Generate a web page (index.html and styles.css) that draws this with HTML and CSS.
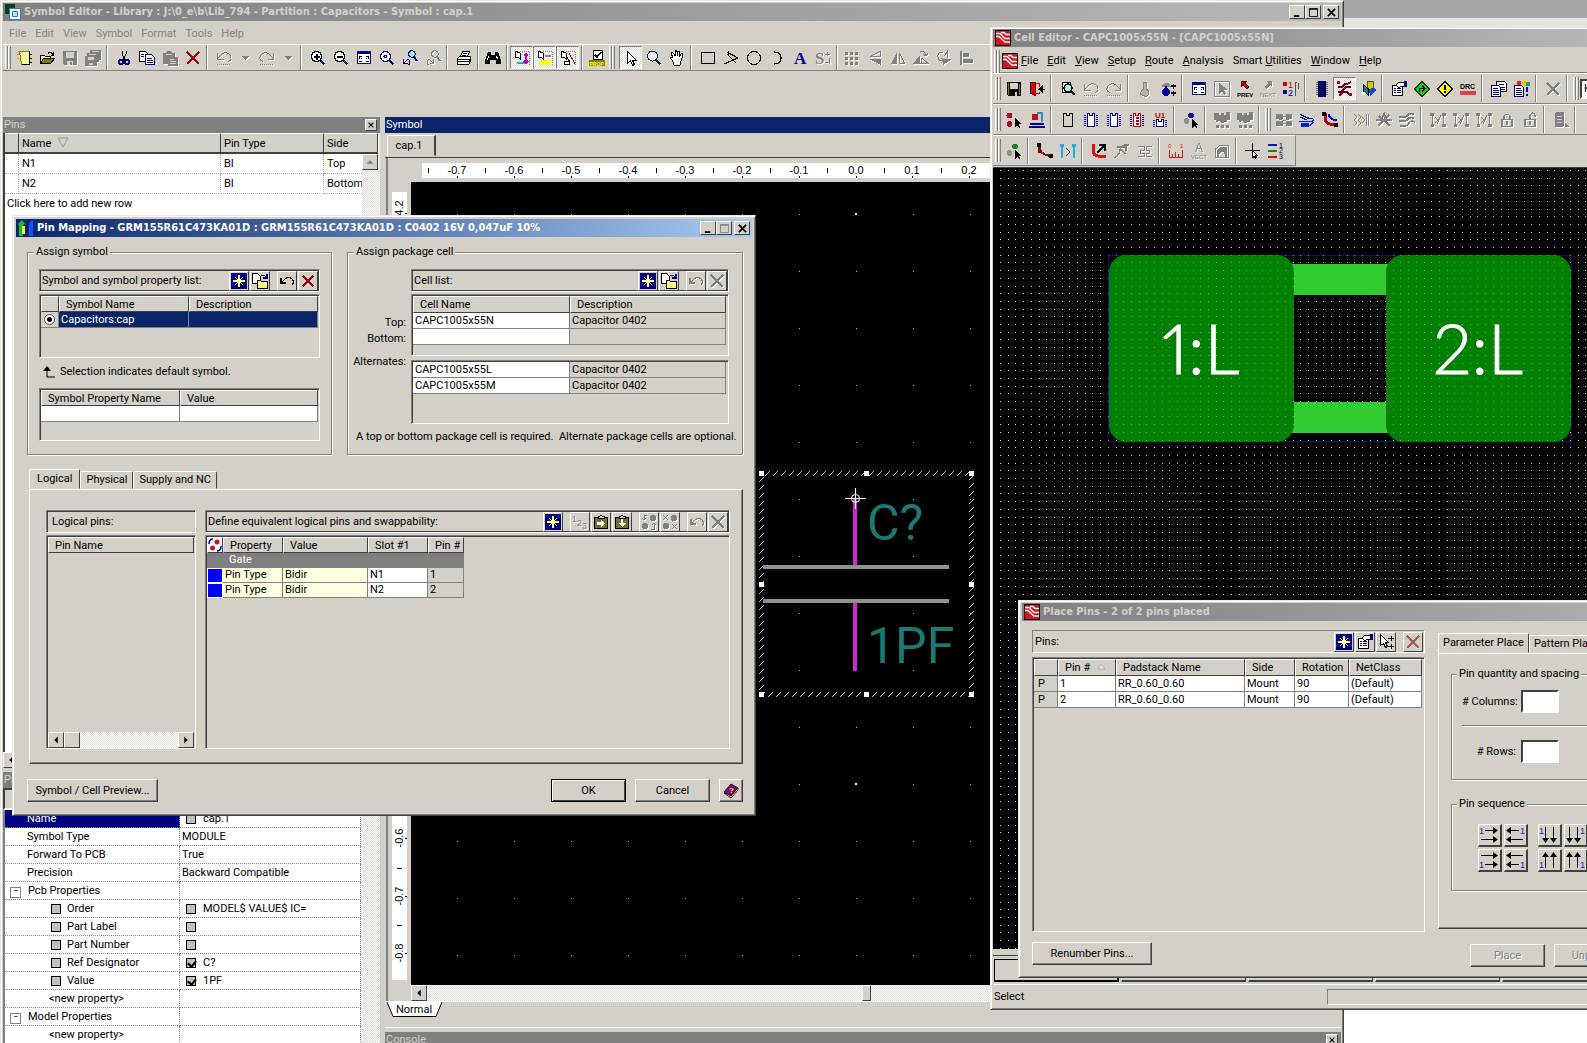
FILE: index.html
```html
<!DOCTYPE html>
<html lang="en">
<head>
<meta charset="utf-8">
<title>Symbol Editor</title>
<link rel="stylesheet" href="styles.css">
</head>
<body>
<svg class="sprite" aria-hidden="true">
  <defs>
    <symbol id="new" viewBox="0 0 16 16"><path fill="#ffffa0" stroke="#808000" d="M3.500 1.500h10v13h-8z"/><path stroke="#000" d="M13.500 1v14M14 4.500h2M14 8.500h2M14 12.500h2M6 14.500h8"/><path stroke="#c8a000" d="M1 4.500h2M1 8.500h2M2 1l3 3"/></symbol>
    <symbol id="open" viewBox="0 0 16 16"><path fill="#ffff80" stroke="#000" d="M1.500 13.500v-8h4l1 1h5v3"/><path fill="#808000" stroke="#000" d="M1.500 13.500l3-5h11l-4 5z"/><path fill="none" stroke="#000" d="M9 3.500q2-2 4 0l1 1M14.500 2v3h-3"/></symbol>
    <symbol id="save" viewBox="0 0 16 16"><path fill="currentColor" d="M1 1h14v14H2l-1-1z"/><path fill="#d4d0c8" d="M4 2h8v6H4zM5 11h6v4H5z"/><path fill="currentColor" d="M8 12h2v3H8z"/></symbol>
    <symbol id="saveall" viewBox="0 0 16 16"><path fill="currentColor" d="M5 0h11v10h-2v2h-2v4H0V6h2V3h3z"/><path fill="#d4d0c8" d="M7 1h7v1H7zM4 4h7v1H4zM3 7h6v3H3zM4 13h4v2H4z"/></symbol>
    <symbol id="cut" viewBox="0 0 16 16"><path fill="none" stroke="#000" d="M6 1v3l3 6M10 1v3l-3 6"/><g fill="none" stroke="#000080" stroke-width="1.500"><circle cx="5" cy="12" r="2.200"/><circle cx="11" cy="12" r="2.200"/></g></symbol>
    <symbol id="copy" viewBox="0 0 16 16"><path fill="#fff" stroke="#000" d="M.500 1.500h6l2 2v8h-8z"/><path fill="#fff" stroke="#000080" d="M6.500 4.500h6l3 3v7h-9z"/><path stroke="#000080" d="M2 4.500h3M2 6.500h3M8 8.500h5M8 10.500h6M8 12.500h6"/></symbol>
    <symbol id="paste" viewBox="0 0 16 16"><path fill="currentColor" d="M1 3h3l1-2h4l1 2h3v4h3v9H6v-2H1z"/><path stroke="#d4d0c8" d="M4 4.500h6M8 9.500h4M8 11.500h6M8 13.500h6"/></symbol>
    <symbol id="cross" viewBox="0 0 16 16"><path fill="none" stroke="currentColor" stroke-width="2" d="M2 2l12 12M14 2L2 14"/></symbol>
    <symbol id="undo" viewBox="0 0 16 16"><path fill="none" stroke="currentColor" d="M1.500 3v6h6M2 8l4-4q5-3 8 1t-2 7"/><path stroke="currentColor" stroke-dasharray="1 1" d="M1 14.500h14"/></symbol>
    <symbol id="redo" viewBox="0 0 16 16"><path fill="none" stroke="currentColor" d="M14.500 3v6h-6M14 8l-4-4q-5-3-8 1t2 7"/><path stroke="currentColor" stroke-dasharray="1 1" d="M1 14.500h14"/></symbol>
    <symbol id="undo2" viewBox="0 0 16 16"><path fill="none" stroke="currentColor" stroke-width="1.300" d="M2 5v5h5M2 10l4-4q4-3 7 0t0 6"/></symbol>
    <symbol id="down" viewBox="0 0 16 16"><path fill="currentColor" d="M4 6h8l-4 4z"/></symbol>
    <symbol id="zoomin" viewBox="0 0 16 16"><circle cx="6.500" cy="6.500" r="5" fill="#fff" stroke="#000" stroke-width="1.400"/><path stroke="#000" stroke-width="2" d="M3.500 6.500h6M6.500 3.500v6"/><path stroke="#001060" stroke-width="2.500" d="M10.500 10.500l4 4"/></symbol>
    <symbol id="zoomout" viewBox="0 0 16 16"><circle cx="6.500" cy="6.500" r="5" fill="#fff" stroke="#000" stroke-width="1.400"/><path stroke="#000" stroke-width="2" d="M3.500 6.500h6"/><path stroke="#001060" stroke-width="2.500" d="M10.500 10.500l4 4"/></symbol>
    <symbol id="fit" viewBox="0 0 16 16"><path fill="#fff" stroke="#000080" d="M1.500 1.500h13v12h-13z"/><path fill="#000080" d="M1 1h14v3H1z"/><path stroke="#000" d="M3 6.500h3M3.500 6v3M13 6.500h-3M12.500 6v3M3 11.500h3M13 11.500h-3M5 8l1 1M11 8l-1 1"/></symbol>
    <symbol id="zoomdot" viewBox="0 0 16 16"><circle cx="6.500" cy="6.500" r="5" fill="#fff" stroke="#000080" stroke-width="1.200"/><circle cx="6.500" cy="6.500" r="1.500" fill="none" stroke="#00a"/><path stroke="#001060" stroke-width="2" d="M10.500 10.500l4 4"/></symbol>
    <symbol id="zoomprev" viewBox="0 0 16 16"><circle cx="10" cy="4" r="3.200" fill="#8ff" stroke="currentColor"/><path stroke="currentColor" stroke-width="2" d="M12 7l3 4"/><path fill="none" stroke="currentColor" d="M1.500 9v4h4M2 13l3-3q3-1 3 2t-2 3"/></symbol>
    <symbol id="zoomnext" viewBox="0 0 16 16"><circle cx="10" cy="4" r="3.200" fill="none" stroke="currentColor"/><path stroke="currentColor" stroke-width="2" d="M12 7l3 4"/><path fill="none" stroke="currentColor" d="M8.500 9v4h-4M8 13l-3-3q-3-1-3 2t2 3"/></symbol>
    <symbol id="print" viewBox="0 0 16 16"><path fill="#fff" stroke="#000" d="M4.500 6.500l2-5h7l-2 5zM1.500 8.500l2-2h11v5l-2 3h-11z"/><path stroke="#000" d="M7 3.500h4M6 5.500h4M2 9.500h11M2 11.500h11M13 9v5"/></symbol>
    <symbol id="find" viewBox="0 0 16 16"><path fill="#000" d="M3 2h3v3h4V2h3l3 8v4h-5v-4H5v4H0v-4z"/><path stroke="#fff" d="M3.500 6l-1 4M11.500 6l1 3"/></symbol>
    <symbol id="pinA" viewBox="0 0 16 16"><path fill="#fff" stroke="#000" d="M1 1l5 2v6l-2-2-3 0z"/><path stroke="#00c0c0" stroke-width="2" d="M3 13h8"/><path fill="none" stroke="#c000c0" stroke-width="2" d="M12 4v9M10 6l2-2 2 2M10 11l2 2 2-2"/><path stroke="#888" stroke-dasharray="1 1" d="M6 1.500h9M15.500 2v13"/></symbol>
    <symbol id="pinB" viewBox="0 0 16 16"><path fill="#fff" stroke="#000" d="M1 1l5 2v6l-2-2-3 0z"/><path fill="#ff0" d="M3 10h11v5H3z"/><path stroke="#888" stroke-width="2" d="M8 6h6"/><path stroke="#888" stroke-dasharray="1 1" d="M6 1.500h9M15.500 2v13"/></symbol>
    <symbol id="pinC" viewBox="0 0 16 16"><path fill="#fff" stroke="#000" d="M1 1l5 2v6l-2-2-3 0zM4 11h5v3H4zM6 6l4 6"/><path stroke="#802020" d="M9 3l6 11"/><path stroke="#888" stroke-dasharray="1 1" d="M6 1.500h9M15.500 2v13"/></symbol>
    <symbol id="prop" viewBox="0 0 16 16"><path fill="#fff" stroke="#000" d="M4.500.500h9v9h-9z"/><path fill="none" stroke="#000" stroke-width="1.500" d="M6 5l2 2 4-5"/><path fill="#808000" d="M0 10h16v6H0z"/><text x="0.500" y="15.500" font-size="5" font-weight="700" fill="#ff0">PROP</text></symbol>
    <symbol id="arrow" viewBox="0 0 16 16"><path fill="#fff" stroke="currentColor" d="M4.500 1.500v12l3-3 2 5 2-1-2-4h4z"/></symbol>
    <symbol id="lens" viewBox="0 0 16 16"><circle cx="6.500" cy="6" r="5" fill="#eee" stroke="#222"/><path stroke="#024" stroke-width="2.500" d="M10 10l4.500 4.500"/></symbol>
    <symbol id="hand" viewBox="0 0 16 16"><path fill="#fff" stroke="#000" d="M5 15q0-3-4-7 1-2 3 0L2 3q2-1 3 1l1 2V1q2-1 2 1v4l1-5q2 0 2 1l-1 5 2-3q2-1 2 1-2 6-3 10z"/></symbol>
    <symbol id="rect" viewBox="0 0 16 16"><path fill="none" stroke="#000" stroke-width="1.300" d="M1.500 2.500h13v11h-13z"/></symbol>
    <symbol id="poly" viewBox="0 0 16 16"><path fill="none" stroke="#000" stroke-width="1.200" d="M4 2l11 6-14 6M6 1l-1 4 8 8"/></symbol>
    <symbol id="circ" viewBox="0 0 16 16"><circle cx="8" cy="8" r="6.500" fill="none" stroke="#000"/></symbol>
    <symbol id="arc" viewBox="0 0 16 16"><path fill="none" stroke="#000" stroke-width="1.200" d="M5 2q7 0 7 6t-7 6"/></symbol>
    <symbol id="txtA" viewBox="0 0 16 16"><text class="serif" x="2" y="14" font-size="17" font-weight="700" fill="#000080">A</text></symbol>
    <symbol id="txtS" viewBox="0 0 16 16"><text class="serif" x="0" y="14" font-size="17" font-weight="700" fill="currentColor">S</text><path stroke="currentColor" fill="none" d="M10 4h5M12 2v4M10 12h5M14 8v6"/></symbol>
    <symbol id="grid" viewBox="0 0 16 16"><path stroke="currentColor" stroke-width="3" stroke-dasharray="3 2" d="M1 3.500h13M1 8.500h13M1 13.500h13"/></symbol>
    <symbol id="flipv" viewBox="0 0 16 16"><path fill="none" stroke="currentColor" d="M13 1.500v5H3z"/><path fill="currentColor" d="M14 15V9H2z"/></symbol>
    <symbol id="fliph" viewBox="0 0 16 16"><path fill="currentColor" d="M1 14h6V2z"/><path fill="none" stroke="currentColor" d="M14.500 13.500h-5V3z"/></symbol>
    <symbol id="rotl" viewBox="0 0 16 16"><path fill="currentColor" d="M0 14h7V5z"/><path fill="none" stroke="currentColor" d="M8 13.500h7L9 8zM7 2q5-2 6 3M13 6l-3-2M13 6l2-3"/></symbol>
    <symbol id="rotr" viewBox="0 0 16 16"><path fill="currentColor" d="M6 9h10l-9 6z"/><path fill="none" stroke="currentColor" d="M11.500 8V1l-3 5M7 2q-6 0-5 5t5 3M5 8l3 2-3 3"/></symbol>
    <symbol id="align" viewBox="0 0 16 16"><path fill="currentColor" d="M1 1h2v14H1zM4 3h6v4H4zM4 9h10v4H4z"/></symbol>

    <symbol id="logo" viewBox="0 0 16 16"><path fill="#d81420" stroke="#000" d="M.500.500h15v15H.500z"/><path fill="none" stroke="#fff" stroke-width="1.300" d="M1 3.500h4l5 5h5M1 6.500h3l6 5.500h5M6 2.500h3l2 2h4"/></symbol>
    <symbol id="disk" viewBox="0 0 16 16"><path fill="#000" d="M1 1h14v14H2l-1-1z"/><path fill="#808000" d="M2 2h1v12H2zM13 3h1v11h-1z"/><path fill="#d4d0c8" d="M4 2h8v6H4zM9 11h2v4H9z"/></symbol>
    <symbol id="exit" viewBox="0 0 16 16"><path fill="#d00" stroke="#400" d="M1.500 1.500h5v13l-5-2z"/><path stroke="#d00" fill="none" d="M6 2.500h4v3M6 12.500h4v-2"/><path stroke="#000" fill="#000" d="M16 8H10l3-3v6l-3-3"/></symbol>
    <symbol id="review" viewBox="0 0 16 16"><path fill="#fff" stroke="#000" d="M2.500 1.500h8v10h-8z"/><circle cx="8" cy="7" r="4" fill="#bee" stroke="#000" stroke-width="1.500"/><path stroke="#000" stroke-width="2.500" d="M11 10l4 4"/></symbol>
    <symbol id="drop" viewBox="0 0 16 16"><path fill="#b8b4ac" stroke="currentColor" d="M6.500 8V1.500h3V8q3 2 2 5t-4 2-4-2 3-5z"/></symbol>
    <symbol id="bulbs" viewBox="0 0 16 16"><path fill="#888" d="M2 5q3-5 8-2l1 3H2z"/><circle cx="6" cy="11" r="4" fill="#00a"/><path fill="#00a" d="M5 5h2v4H5z"/><path stroke="#000" stroke-width="1.500" d="M11 5h5M13.500 2.500v5M11 12h5M13.500 9.500v5"/></symbol>
    <symbol id="selbox" viewBox="0 0 16 16"><path fill="none" stroke="currentColor" d="M.500.500h15v15H.500z"/><path fill="currentColor" d="M5 2v11l3-3 2 4 2-1-2-4h4z"/></symbol>
    <symbol id="prev" viewBox="0 0 16 16"><path fill="#c00" stroke="#400" d="M4 0h6L8 2l4 4-2 2-4-4-2 2z"/><text x="0" y="15.500" font-size="6" font-weight="700">PREV</text></symbol>
    <symbol id="next" viewBox="0 0 16 16"><path fill="currentColor" d="M12 0H6l2 2-4 4 2 2 4-4 2 2z"/><text x="0" y="15.500" font-size="6" fill="currentColor">NEXT</text></symbol>
    <symbol id="list12" viewBox="0 0 16 16"><path fill="#c00" d="M0 1h4v4H0z"/><path fill="#00a" d="M0 9h4v4H0z"/><text x="5" y="7" font-size="9" fill="#c00">1</text><text x="5" y="15" font-size="9" fill="#00a">2</text><path stroke="#555" fill="none" d="M12 1v14M14 1h-2M15.500 1.500v6"/></symbol>
    <symbol id="chip" viewBox="0 0 16 16"><path fill="#000080" d="M4 0h8v16H4z"/><path stroke="#000" stroke-dasharray="1 1" stroke-width="12" d="M8 1v14" opacity=".5"/></symbol>
    <symbol id="traces" viewBox="0 0 16 16"><path fill="none" stroke="#700010" stroke-width="1.600" d="M1 6h4l3-3h2l4-2M1 11h3l5-5h5M2 15l4-4h4l3 3"/><path fill="#a00018" d="M0 0h3v3H0zM12 12h3v3h-3z"/></symbol>
    <symbol id="planes" viewBox="0 0 16 16"><path fill="#cc0" stroke="#550" d="M7.500.500h6v8h-6z"/><path fill="#0a8080" stroke="#000" d="M3.500 4l5 4v6l-5-3z"/><path fill="#24c" d="M9 9l5-3 2 3-6 6z"/><path fill="#fff" d="M2 10l4 2v3L1 13z"/></symbol>
    <symbol id="props" viewBox="0 0 16 16"><path fill="#fff" stroke="#000" d="M1.500 4.500h10v10h-10z"/><path stroke="#000080" d="M3 7.500h2M6 7.500h4M3 9.500h2M6 9.500h4M3 11.500h2M6 11.500h4"/><path fill="#fff" stroke="#000" d="M5 4l3-3h5v4l-3 0-2 2z"/><path fill="#000080" d="M13 0h3v6h-3z"/></symbol>
    <symbol id="goon" viewBox="0 0 16 16"><path fill="#2c2" stroke="#040" d="M8 .500L15.500 8 8 15.500.500 8z"/><path fill="none" stroke="#000" stroke-width="1.500" d="M5.500 11V7.500h4M8 5l3 2.500L8 10"/></symbol>
    <symbol id="warn" viewBox="0 0 16 16"><path fill="#ff0" stroke="#000" d="M8 .500L15.500 8 8 15.500.500 8z"/><path fill="#000" d="M7 4h2v5H7zM7 10h2v2H7z"/></symbol>
    <symbol id="drc" viewBox="0 0 16 16"><text x="0" y="8" font-size="7" font-weight="700">DRC</text><path fill="#e04040" d="M0 10h16v4H0z"/></symbol>
    <symbol id="docs" viewBox="0 0 16 16"><path fill="#fff" stroke="#000" d="M5.500.500h8l2 2v8h-10z"/><path fill="#fff" stroke="#000060" d="M.500 4.500h7l2 2v9h-9z"/><path stroke="#000080" d="M2 7.500h5M2 9.500h6M2 11.500h6M2 13.500h6M8 3.500h5M10 6.500h4M10 8.500h4"/></symbol>
    <symbol id="docs2" viewBox="0 0 16 16"><path fill="#e02020" d="M3 0h4v4H3z"/><path fill="#ffc000" d="M8 0h4v5H8z"/><path fill="#20a040" d="M12 1h4v4h-4z"/><path fill="#fff" stroke="#000060" d="M.500 4.500h7l2 2v9h-9z"/><path stroke="#000080" d="M2 7.500h5M2 9.500h6M2 11.500h6M2 13.500h6"/><path stroke="#00f" stroke-width="2" d="M13 6v5M13 13v2"/></symbol>

    <symbol id="pinsel" viewBox="0 0 16 16"><circle cx="3.500" cy="3.500" r="3" fill="#a01020"/><circle cx="3.500" cy="12" r="3" fill="#a01020"/><path d="M9 6v9l2-2 2 3 1-1-1-3h2z"/></symbol>
    <symbol id="pinplace" viewBox="0 0 16 16"><circle cx="6" cy="5" r="3.500" fill="#c01020"/><path fill="none" stroke="#48a" stroke-width="1.500" d="M8 1h5v9"/><path fill="#000090" d="M1 11h14v2H1zM0 14h16v2H0z"/></symbol>
    <symbol id="part1" viewBox="0 0 16 16"><path fill="none" stroke="#000" stroke-width="1.200" d="M3.500 1.500h3v2h3v-2h3v13h-9z"/></symbol>
    <symbol id="part2" viewBox="0 0 16 16"><path fill="#fff" stroke="#00007c" stroke-width="1.500" d="M4.500 1.500h2v2h3v-2h2v13h-7z"/><path stroke="#0000c0" stroke-width="2" stroke-dasharray="1 1" d="M2 3v11M14 3v11"/></symbol>
    <symbol id="part3" viewBox="0 0 16 16"><path fill="#fff" stroke="#c00020" stroke-width="1.500" d="M4.500 1.500h2v2h3v-2h2v13h-7z"/><path stroke="#000090" stroke-width="2" stroke-dasharray="1 1" d="M2 3v11M14 3v11"/><path stroke="#c00020" stroke-width="3" stroke-dasharray="2 1" d="M8 5v9"/></symbol>
    <symbol id="part4" viewBox="0 0 16 16"><text x="3" y="6" font-size="8" font-weight="700" fill="#c00">U1</text><path fill="#fff" stroke="#00007c" stroke-width="1.500" d="M4.500 7.500h2v2h3v-2h2v7h-7z"/><path stroke="#0000c0" stroke-width="2" stroke-dasharray="1 1" d="M2 8v7M14 8v7"/></symbol>
    <symbol id="dotsel" viewBox="0 0 16 16"><circle cx="8" cy="3.500" r="3" fill="#0010a0"/><circle cx="3.500" cy="9" r="3" fill="#909090"/><path d="M9 7v9l2-2 2 2 1-1-1-2h3z"/></symbol>
    <symbol id="dotselg" viewBox="0 0 16 16"><circle cx="9" cy="3.500" r="3" fill="#208020"/><circle cx="3.500" cy="10" r="3" fill="#909090"/><path d="M9 7v9l2-2 2 2 1-1-1-2h3z"/></symbol>
    <symbol id="cloud" viewBox="0 0 16 16"><path fill="currentColor" d="M0 1h5v2h2V1h3v2h2V0h4v8h-3v2h-3l-1 1H7l-2-2-3 1V8H0z"/><path stroke="currentColor" stroke-width="3" stroke-dasharray="3 2" d="M2 14h13"/></symbol>
    <symbol id="bus" viewBox="0 0 16 16"><path fill="currentColor" d="M0 2h7v2h3V2h6v5h-6V5H7v2H0zM0 9h7v2h3V9h6v5h-6v-2H7v2H0z"/><path stroke="currentColor" d="M3 7l10 3M3 10l10-3"/></symbol>
    <symbol id="fan" viewBox="0 0 16 16"><path fill="none" stroke="#0020c0" stroke-width="1.200" d="M1 2l7 4q6 0 7 2M1 5l7 3M0 9.500h10q4 0 5-2M2 14h8l5-4M2 12h8"/></symbol>
    <symbol id="route" viewBox="0 0 16 16"><path fill="none" stroke="#c00010" stroke-width="3" d="M3 1v6q1 6 11 6"/><path fill="none" stroke="#0000c0" stroke-width="2" d="M7 2q0 6 8 6"/><path d="M0 0h4v4H0zM12 11h4v4h-4z"/></symbol>
    <symbol id="wave" viewBox="0 0 16 16"><path fill="none" stroke="currentColor" d="M1 2l3 3-3 3 3 3-3 3M5 2l3 3-3 3 3 3-3 3M9 11l3-3-3-3M13.500 2v12M15.500 2v12"/></symbol>
    <symbol id="star" viewBox="0 0 16 16"><path fill="none" stroke="currentColor" stroke-width="2" d="M0 8h5l3-6 2 6h6M2 14l6-6 6 6M3 4l4 4M13 3l-4 4"/></symbol>
    <symbol id="waves" viewBox="0 0 16 16"><path fill="none" stroke="currentColor" stroke-width="1.600" d="M0 5h4q4 0 5-2t6-1M0 9h4q4 0 5-2t6-1M1 14h4q4 0 5-3t6-1"/></symbol>
    <symbol id="netx" viewBox="0 0 16 16"><path fill="none" stroke="currentColor" d="M2.500 2v12M13.500 2v12M5 5l3 3-3 3M7 12l4-9"/><path fill="currentColor" d="M0 1h4v3H0zM12 1h4v3h-4zM12 12h4v3h-4zM1 12h3v3H1z"/></symbol>
    <symbol id="lock" viewBox="0 0 16 16"><path fill="none" stroke="currentColor" stroke-width="1.300" d="M3 7.500h10v7H3zM5 7V4q3-4 6 0v3M8 9v4"/></symbol>
    <symbol id="unlock" viewBox="0 0 16 16"><path fill="none" stroke="currentColor" stroke-width="1.300" d="M3 7.500h10v7H3zM8 7V3q3-4 5 0v2M8 9v4"/></symbol>
    <symbol id="traffic" viewBox="0 0 16 16"><rect x="2" y="0" width="9" height="15" rx="2" fill="currentColor"/><path stroke="#d4d0c8" d="M4 4.500h5M4 7.500h5M4 10.500h5"/><path fill="currentColor" d="M12 10v5h4z"/></symbol>
    <symbol id="elbow" viewBox="0 0 16 16"><path fill="none" stroke="#700010" stroke-width="2" d="M2 2q0 10 12 11"/><path d="M0 0h4v4H0zM12 11h4v4h-4z"/><path fill="#900" d="M1 4h3v6H1z"/></symbol>
    <symbol id="swap" viewBox="0 0 16 16"><path fill="none" stroke="#20b0e0" stroke-width="2" d="M2 4v11M14 4v11"/><circle cx="2" cy="2.500" r="2" fill="#20b0e0"/><circle cx="14" cy="2.500" r="2" fill="#20b0e0"/><path fill="none" stroke="#004080" stroke-width="1.300" d="M6 5l4 4-4 4"/></symbol>
    <symbol id="bend" viewBox="0 0 16 16"><path fill="none" stroke="#e01010" stroke-width="3" d="M2 1v7q0 4 5 5h8"/><path fill="none" stroke="#000" stroke-width="2" d="M6 10l7-7M8 2h6v6"/></symbol>
    <symbol id="spur" viewBox="0 0 16 16"><path fill="none" stroke="currentColor" stroke-width="1.300" d="M0 15q5-2 6-8t9-5M3 4h9v4M6 6l6 5"/></symbol>
    <symbol id="maze" viewBox="0 0 16 16"><path fill="none" stroke="currentColor" d="M1 3.500h6v4H3v3h4v3H1M15 3.500H9.500v4h3v3h-3v3H15"/></symbol>
    <symbol id="measure" viewBox="0 0 16 16"><path fill="none" stroke="#d81818" stroke-width="1.300" d="M1.500 7v7.500h13V7M4.500 11v3M7.500 9v5M10.500 11v3"/><text x="0" y="5" font-size="6" fill="#d81818">0</text><text x="12" y="5" font-size="6" fill="#d81818">1</text></symbol>
    <symbol id="vect" viewBox="0 0 16 16"><text x="4" y="9" font-size="12" fill="currentColor">A</text><text x="0" y="16" font-size="6" fill="currentColor">VECT</text></symbol>
    <symbol id="copper" viewBox="0 0 16 16"><path fill="none" stroke="currentColor" d="M1.500 14V6l5-4h8v12z"/><path fill="currentColor" d="M3 14V7l4-3h6v10h-2q0-5-3-5t-3 5z"/></symbol>
    <symbol id="origin" viewBox="0 0 16 16"><path stroke="#000" stroke-width="1.400" d="M0 7.500h15M7.500 0v15"/><path fill="#fff" stroke="#000" d="M7.500 7.500v7l2-1 1 2 1-1-1-2h2z"/></symbol>
    <symbol id="order" viewBox="0 0 16 16"><path fill="#0020b0" d="M0 1h9v2H0z"/><path fill="#108020" d="M0 7h9v2H0z"/><path fill="#c01010" d="M0 13h9v2H0z"/><text x="11" y="5" font-size="7">1</text><text x="11" y="10" font-size="7">2</text><text x="11" y="16" font-size="7">3</text></symbol>

    <symbol id="spark" viewBox="0 0 16 16"><path fill="#000080" d="M0 0h16v16H0z"/><path stroke="#ffffb0" stroke-width="1.400" d="M8 2v12M2 8h12"/><path stroke="#ff8" d="M4 4l8 8M12 4l-8 8"/></symbol>
    <symbol id="import" viewBox="0 0 16 16"><path fill="#fff" stroke="#000" d="M.500.500h5l3 3v7h-8z"/><path fill="#ff8" stroke="#000" d="M5.500 7.500h3l1 1h6v7h-10z"/><path fill="none" stroke="#000080" stroke-width="1.300" d="M9 3q3-2 5 1M15 1v4h-4"/></symbol>
    <symbol id="renum" viewBox="0 0 16 16"><text x="0" y="8" font-size="9" fill="currentColor">1</text><text x="5" y="12" font-size="9" fill="currentColor">2</text><text x="10" y="15" font-size="9" fill="currentColor">3</text></symbol>
    <symbol id="clipr" viewBox="0 0 16 16"><path fill="#707030" stroke="#000" d="M1.500 3.500h13v11h-13z"/><path fill="#ddd" stroke="#000" d="M5 4V2h2l1-1 1 1h2v2z"/><path fill="#fff" d="M4 8h4V6l4 3-4 4v-2H4z"/></symbol>
    <symbol id="clipd" viewBox="0 0 16 16"><path fill="#707030" stroke="#000" d="M1.500 3.500h13v11h-13z"/><path fill="#ddd" stroke="#000" d="M5 4V2h2l1-1 1 1h2v2z"/><path fill="#fff" d="M7 5h2v4h3l-4 4-4-4h3z"/></symbol>
    <symbol id="dots1" viewBox="0 0 16 16"><g fill="currentColor"><circle cx="12" cy="4" r="3"/><circle cx="4" cy="12" r="3"/></g><path fill="none" stroke="currentColor" d="M6 1H3v5M1 4l2 2 2-2M10 15h3v-5M11 11l2-2 2 2"/></symbol>
    <symbol id="dots2" viewBox="0 0 16 16"><g fill="currentColor"><circle cx="12" cy="4" r="3"/><circle cx="4" cy="12" r="3"/></g><path fill="none" stroke="currentColor" d="M1 1l5 5M6 1L1 6M10 10l5 5M15 10l-5 5"/></symbol>
    <symbol id="swapdots" viewBox="0 0 14 14"><path fill="#fff" d="M0 0h14v14H0z"/><g fill="#c01828"><circle cx="9" cy="4" r="2.500"/><circle cx="4.500" cy="10" r="2.500"/></g><path fill="none" stroke="#0000c0" stroke-width="1.500" d="M5 1Q1 1 1 6M9 13q4 0 4-5"/></symbol>
    <symbol id="place" viewBox="0 0 16 16"><path fill="#fff" stroke="#000" d="M2.500.500v11l3-2 2 4 2-1-2-4h3z"/><path stroke="#000" d="M10 4.500h6M13 2v5M10 12.500h6M13 10v5"/></symbol>
    <symbol id="book" viewBox="0 0 16 16"><path fill="#fff" stroke="#402" d="M1 10l7 5 7-8v-2l-7 7z"/><path fill="#701070" stroke="#302" d="M1 9l7-8 7 4-7 8z"/><text x="6" y="10" font-size="8" font-weight="700" fill="#fd0">?</text></symbol>
    <symbol id="gear" viewBox="0 0 16 16"><path fill="#0a3d20" d="M0 0h10v10H0z"/><path fill="#fff" stroke="#2080d0" d="M4.500 4.500h11v11h-11z"/><path fill="#bdf" stroke="#2080d0" d="M7.500 7.500h5v5h-5z"/></symbol>
    <symbol id="pm" viewBox="0 0 16 16"><path fill="#20c020" d="M0 4l4-4 3 4-2 1v11H1V6z"/><path fill="#ff4" d="M4 6h3v8H4z"/><path fill="#1050ff" d="M12 2l3-2v16h-4V5z"/></symbol>
    <symbol id="larr" viewBox="0 0 16 16"><path d="M10 4v8L6 8z"/></symbol>
    <symbol id="rarr" viewBox="0 0 16 16"><path d="M6 4v8l4-4z"/></symbol>
    <symbol id="uarr" viewBox="0 0 16 16"><path fill="#808080" d="M4 10h8L8 6z"/></symbol>
    <symbol id="x" viewBox="0 0 10 10"><path stroke="currentColor" stroke-width="2" d="M1 1l8 8M9 1L1 9"/></symbol>
    <symbol id="min" viewBox="0 0 10 10"><path fill="currentColor" d="M1 8h6v2H1z"/></symbol>
    <symbol id="max" viewBox="0 0 10 10"><path fill="none" stroke="currentColor" d="M.500.500h9v9h-9zM0 1.500h10"/></symbol>
    <symbol id="seqr" viewBox="0 0 20 20"><path stroke="#000" fill="none" d="M6 5.500h10M2 14.500h14"/><path d="M14 2l5 3.500-5 3.500zM14 11l5 3.500-5 3.500z"/><text x="0" y="9" font-size="9" fill="#2010c0">1</text></symbol>
    <symbol id="seql" viewBox="0 0 20 20"><path stroke="#000" fill="none" d="M4 5.500h10M4 14.500h14"/><path d="M6 2L1 5.500 6 9zM6 11l-5 3.500L6 18z"/><text x="15" y="9" font-size="9" fill="#2010c0">1</text></symbol>
    <symbol id="seqr2" viewBox="0 0 20 20"><path stroke="#000" fill="none" d="M2 5.500h14M6 14.500h10"/><path d="M14 2l5 3.500-5 3.500zM14 11l5 3.500-5 3.500z"/><text x="0" y="18" font-size="9" fill="#2010c0">1</text></symbol>
    <symbol id="seql2" viewBox="0 0 20 20"><path stroke="#000" fill="none" d="M4 5.500h14M4 14.500h10"/><path d="M6 2L1 5.500 6 9zM6 11l-5 3.500L6 18z"/><text x="15" y="18" font-size="9" fill="#2010c0">1</text></symbol>
    <symbol id="seqd" viewBox="0 0 20 20"><path stroke="#000" fill="none" d="M6.500 2v14M14.500 2v14"/><path d="M3 13h7l-3.500 5zM11 13h7l-3.500 5z"/><text x="0" y="9" font-size="9" fill="#2010c0">1</text></symbol>
    <symbol id="seqd2" viewBox="0 0 20 20"><path stroke="#000" fill="none" d="M4.500 2v14M12.500 2v14"/><path d="M1 13h7l-3.500 5zM9 13h7l-3.500 5z"/><text x="15" y="9" font-size="9" fill="#2010c0">1</text></symbol>
    <symbol id="sequ" viewBox="0 0 20 20"><path stroke="#000" fill="none" d="M6.500 4v14M14.500 4v14"/><path d="M3 7h7L6.500 2zM11 7h7l-3.500-5z"/><text x="0" y="18" font-size="9" fill="#2010c0">1</text></symbol>
    <symbol id="sequ2" viewBox="0 0 20 20"><path stroke="#000" fill="none" d="M4.500 4v14M12.500 4v14"/><path d="M1 7h7L4.500 2zM9 7h7l-3.500-5z"/><text x="15" y="18" font-size="9" fill="#2010c0">1</text></symbol>
  </defs>
</svg>

<div class="backdrop"></div>

<main class="window editor">
  <header class="titlebar inactive">
    <svg class="icon"><use href="#gear"/></svg>
    <h1>Symbol Editor - Library : J:\0_e\b\Lib_794 - Partition : Capacitors - Symbol : cap.1</h1>
    <span class="captions"><button aria-label="Minimize"><svg><use href="#min"/></svg></button><button aria-label="Maximize"><svg><use href="#max"/></svg></button><button class="close" aria-label="Close"><svg><use href="#x"/></svg></button></span>
  </header>
  <nav class="menu muted"><a href="#">File</a><a href="#">Edit</a><a href="#">View</a><a href="#">Symbol</a><a href="#">Format</a><a href="#">Tools</a><a href="#">Help</a></nav>
  <div class="toolbar main-tools">
    <i class="grip"></i>
    <button aria-label="New"><svg><use href="#new"/></svg></button><button aria-label="Open"><svg><use href="#open"/></svg></button><button class="off" aria-label="Save"><svg><use href="#save"/></svg></button><button class="off" aria-label="Save all"><svg><use href="#saveall"/></svg></button>
    <i class="sep wide"></i>
    <button aria-label="Cut"><svg><use href="#cut"/></svg></button><button aria-label="Copy"><svg><use href="#copy"/></svg></button><button class="off" aria-label="Paste"><svg><use href="#paste"/></svg></button><button class="red" aria-label="Delete"><svg><use href="#cross"/></svg></button>
    <i class="sep wide"></i>
    <button class="off" aria-label="Undo"><svg><use href="#undo"/></svg></button><button class="off drop" aria-label="Undo list"><svg><use href="#down"/></svg></button><button class="off" aria-label="Redo"><svg><use href="#redo"/></svg></button><button class="off drop" aria-label="Redo list"><svg><use href="#down"/></svg></button>
    <i class="sep wide"></i>
    <button aria-label="Zoom in"><svg><use href="#zoomin"/></svg></button><button aria-label="Zoom out"><svg><use href="#zoomout"/></svg></button><button aria-label="Fit"><svg><use href="#fit"/></svg></button><button aria-label="Zoom area"><svg><use href="#zoomdot"/></svg></button><button class="blue" aria-label="Zoom previous"><svg><use href="#zoomprev"/></svg></button><button class="off" aria-label="Zoom next"><svg><use href="#zoomnext"/></svg></button>
    <i class="sep wide"></i>
    <button aria-label="Print"><svg><use href="#print"/></svg></button>
    <i class="sep"></i>
    <button aria-label="Find"><svg><use href="#find"/></svg></button>
    <i class="sep"></i>
    <button class="pressed" aria-label="Pins visible"><svg><use href="#pinA"/></svg></button><button class="pressed" aria-label="Names visible"><svg><use href="#pinB"/></svg></button><button class="pressed" aria-label="Graphics visible"><svg><use href="#pinC"/></svg></button>
    <i class="sep"></i>
    <button aria-label="Properties"><svg><use href="#prop"/></svg></button>
    <i class="grip"></i>
    <button class="pressed" aria-label="Select"><svg><use href="#arrow"/></svg></button><button aria-label="Zoom"><svg><use href="#lens"/></svg></button><button aria-label="Pan"><svg><use href="#hand"/></svg></button>
    <i class="sep wide"></i>
    <button aria-label="Rectangle"><svg><use href="#rect"/></svg></button><button aria-label="Polyline"><svg><use href="#poly"/></svg></button><button aria-label="Circle"><svg><use href="#circ"/></svg></button><button aria-label="Arc"><svg><use href="#arc"/></svg></button><button aria-label="Text"><svg><use href="#txtA"/></svg></button><button class="off" aria-label="Special text"><svg><use href="#txtS"/></svg></button>
    <i class="sep"></i>
    <button class="off" aria-label="Array"><svg><use href="#grid"/></svg></button><button class="off" aria-label="Flip vertical"><svg><use href="#flipv"/></svg></button><button class="off" aria-label="Flip horizontal"><svg><use href="#fliph"/></svg></button><button class="off" aria-label="Rotate left"><svg><use href="#rotl"/></svg></button><button class="off" aria-label="Rotate right"><svg><use href="#rotr"/></svg></button><button class="off" aria-label="Align"><svg><use href="#align"/></svg></button>
  </div>

  <div class="workspace">
    <div class="left-docks">
      <section class="dock pins-dock">
        <h2>Pins<button class="dock-close" aria-label="Close"><svg><use href="#x"/></svg></button></h2>
        <div class="pins-body">
          <table class="pins-table">
            <colgroup><col class="w14"><col><col class="w103"><col class="w54"></colgroup>
            <thead><tr><th></th><th>Name <svg class="sort"><path d="M1 1h10l-5 9z" fill="none" stroke="#999"/></svg></th><th>Pin Type</th><th>Side</th></tr></thead>
            <tbody><tr><td></td><td>N1</td><td>BI</td><td>Top</td></tr><tr><td></td><td>N2</td><td>BI</td><td>Bottom</td></tr></tbody>
          </table>
          <p class="add-row">Click here to add new row</p>
          <div class="vscroll"><span class="knob"><svg><use href="#uarr"/></svg></span></div>
        </div>
        <div class="hscroll"><span class="knob"><svg><use href="#larr"/></svg></span></div>
      </section>
      <section class="dock prop-dock">
        <h2>Properties</h2>
        <div class="prop-head"></div>
        <div class="prop-body">
          <table class="prop-table">
            <colgroup><col class="w175"><col></colgroup>
            <tbody>
              <tr><th class="sel">Name</th><td><label><input type="checkbox">cap.1</label></td></tr>
              <tr><th>Symbol Type</th><td>MODULE</td></tr>
              <tr><th>Forward To PCB</th><td>True</td></tr>
              <tr><th>Precision</th><td>Backward Compatible</td></tr>
              <tr><th class="group">Pcb Properties</th><td></td></tr>
              <tr><th class="sub"><label><input type="checkbox">Order</label></th><td><label><input type="checkbox">MODEL$ VALUE$ IC=</label></td></tr>
              <tr><th class="sub"><label><input type="checkbox">Part Label</label></th><td><input type="checkbox" aria-label="Show part label"></td></tr>
              <tr><th class="sub"><label><input type="checkbox">Part Number</label></th><td><input type="checkbox" aria-label="Show part number"></td></tr>
              <tr><th class="sub"><label><input type="checkbox">Ref Designator</label></th><td><label><input type="checkbox" checked>C?</label></td></tr>
              <tr><th class="sub"><label><input type="checkbox">Value</label></th><td><label><input type="checkbox" checked>1PF</label></td></tr>
              <tr><th class="newprop">&lt;new property&gt;</th><td></td></tr>
              <tr><th class="group">Model Properties</th><td></td></tr>
              <tr><th class="newprop">&lt;new property&gt;</th><td></td></tr>
            </tbody>
          </table>
          <div class="track"></div>
        </div>
      </section>
    </div>

    <div class="right-docks">
      <section class="dock symbol-dock">
        <h2 class="active">Symbol</h2>
        <div class="doc-tabs"><button class="doc-tab">cap.1</button></div>
        <div class="view">
          <div class="ruler-h">
            <svg width="100%" height="15">
              <g class="tick"><path d="M6.500 5v5M63.500 5v5M120.500 5v5M177.500 5v5M234.500 5v5M291.500 5v5M348.500 5v5M405.500 5v5M462.500 5v5M519.500 5v5"/><path d="M35.500 13v2M92.500 13v2M149.500 13v2M206.500 13v2M263.500 13v2M320.500 13v2M377.500 13v2M434.500 13v2M490.500 13v2M547.500 13v2"/></g>
              <g class="num"><text x="35" y="11">-0.7</text><text x="92" y="11">-0.6</text><text x="149" y="11">-0.5</text><text x="206" y="11">-0.4</text><text x="263" y="11">-0.3</text><text x="320" y="11">-0.2</text><text x="377" y="11">-0.1</text><text x="434" y="11">0.0</text><text x="490" y="11">0.1</text><text x="547" y="11">0.2</text></g>
            </svg>
          </div>
          <div class="ruler-v">
            <svg width="15" height="100%">
              <g class="tick"><path d="M13 21.500h2M13 646.500h2M13 704.500h2M13 761.500h2M5 676.500h5M5 733.500h5"/></g>
              <g class="num"><text transform="translate(11 16) rotate(-90)">4.2</text><text transform="translate(11 646) rotate(-90)">-0.6</text><text transform="translate(11 704) rotate(-90)">-0.7</text><text transform="translate(11 761) rotate(-90)">-0.8</text></g>
            </svg>
          </div>
          <svg class="schematic">
            <defs>
              <pattern id="dots" x="46" y="32" width="57" height="57" patternUnits="userSpaceOnUse"><path fill="#aaa" d="M0 0h1v1H0z"/></pattern>
              <pattern id="hatch" width="8" height="8" patternUnits="userSpaceOnUse"><path stroke="#ccc" d="M0 8L8 0"/></pattern>
            </defs>
            <path class="black" d="M0 0h900v900H0z"/>
            <path fill="url(#dots)" d="M0 0h900v900H0z"/>
            <path fill="#eee" d="M444 31h2v2h-2zM444 601h2v2h-2z"/>
            <path fill="url(#hatch)" fill-rule="evenodd" d="M348 289h215v226H348zM353 294v216h205V294z"/>
            <path stroke="#909090" stroke-width="4" d="M352 385h186M352 419h186"/>
            <path stroke="#d424d4" stroke-width="4" d="M444 317v66M444 421v68"/>
            <g fill="none" stroke="#fff"><circle cx="444.500" cy="316.500" r="4"/><path d="M434 316.500h21M444.500 306v21"/></g>
            <path fill="#fff" d="M348 289h5v5h-5zM453 289h5v5h-5zM558 289h5v5h-5zM348 400h5v5h-5zM558 400h5v5h-5zM348 510h5v5h-5zM453 510h5v5h-5zM558 510h5v5h-5z"/>
            <text class="part-text" x="456" y="358">C?</text>
            <text class="part-text" x="456" y="481">1PF</text>
          </svg>
          <div class="hscroll view-scroll"><span class="knob"><svg><use href="#larr"/></svg></span><span class="thumb"></span></div>
        </div>
        <div class="sheet-tabs"><svg width="58" height="17"><path d="M0 0l6 14.500h43L55 0" fill="#fff" stroke="#000"/><text x="9" y="11">Normal</text></svg></div>
      </section>
      <section class="dock console-dock"><h2>Console<button class="dock-close" aria-label="Close"><svg><use href="#x"/></svg></button></h2></section>
    </div>
  </div>
</main>

<section class="window cell-editor">
  <header class="titlebar inactive"><svg class="icon"><use href="#logo"/></svg><h1>Cell Editor - CAPC1005x55N - [CAPC1005x55N]</h1></header>
  <nav class="menu cell-menu"><i class="grip"></i><svg class="icon"><use href="#logo"/></svg><a href="#"><u>F</u>ile</a><a href="#"><u>E</u>dit</a><a href="#"><u>V</u>iew</a><a href="#"><u>S</u>etup</a><a href="#"><u>R</u>oute</a><a href="#"><u>A</u>nalysis</a><a href="#">Smart <u>U</u>tilities</a><a href="#"><u>W</u>indow</a><a href="#"><u>H</u>elp</a></nav>
  <div class="toolbar">
    <i class="grip"></i>
    <button aria-label="Save"><svg><use href="#disk"/></svg></button><button aria-label="Exit"><svg><use href="#exit"/></svg></button>
    <i class="sep wide"></i>
    <button aria-label="Review"><svg><use href="#review"/></svg></button><button class="off" aria-label="Undo"><svg><use href="#undo"/></svg></button><button class="off" aria-label="Redo"><svg><use href="#redo"/></svg></button>
    <i class="sep wide"></i>
    <button class="off" aria-label="Highlight"><svg><use href="#drop"/></svg></button><button aria-label="Highlight more"><svg><use href="#bulbs"/></svg></button>
    <i class="sep wide"></i>
    <button aria-label="Fit"><svg><use href="#fit"/></svg></button><button class="off" aria-label="Select"><svg><use href="#selbox"/></svg></button><button aria-label="Previous"><svg><use href="#prev"/></svg></button><button class="off" aria-label="Next"><svg><use href="#next"/></svg></button><button aria-label="Layers"><svg><use href="#list12"/></svg></button>
    <i class="sep wide"></i>
    <button aria-label="Place mode"><svg><use href="#chip"/></svg></button><button class="pressed" aria-label="Route mode"><svg><use href="#traces"/></svg></button><button aria-label="Draw mode"><svg><use href="#planes"/></svg></button>
    <i class="sep wide"></i>
    <button aria-label="Properties"><svg><use href="#props"/></svg></button><button aria-label="Go"><svg><use href="#goon"/></svg></button><button aria-label="Hazards"><svg><use href="#warn"/></svg></button><button aria-label="DRC"><svg><use href="#drc"/></svg></button>
    <i class="sep wide"></i>
    <button aria-label="Copy"><svg><use href="#docs"/></svg></button><button aria-label="Reports"><svg><use href="#docs2"/></svg></button>
    <i class="sep wide"></i>
    <button class="off" aria-label="Delete"><svg><use href="#cross"/></svg></button>
    <i class="sep wide"></i><i class="grip"></i><input class="key-in" value="K" aria-label="Key in">
  </div>
  <div class="toolbar">
    <i class="grip"></i>
    <button aria-label="Select pins"><svg><use href="#pinsel"/></svg></button><button aria-label="Place pins"><svg><use href="#pinplace"/></svg></button>
    <i class="sep wide"></i>
    <button aria-label="Outline"><svg><use href="#part1"/></svg></button><button aria-label="Assembly outline"><svg><use href="#part2"/></svg></button><button aria-label="Silkscreen outline"><svg><use href="#part2"/></svg></button><button aria-label="Ref text"><svg><use href="#part3"/></svg></button><button aria-label="Part number"><svg><use href="#part4"/></svg></button>
    <i class="sep wide"></i>
    <button aria-label="Select part"><svg><use href="#dotsel"/></svg></button>
    <i class="sep wide"></i>
    <button class="off" aria-label="Group"><svg><use href="#cloud"/></svg></button><button class="off" aria-label="Ungroup"><svg><use href="#cloud"/></svg></button>
    <i class="sep wide"></i><i class="grip"></i>
    <button class="off" aria-label="Bus"><svg><use href="#bus"/></svg></button><button aria-label="Fanout"><svg><use href="#fan"/></svg></button><button aria-label="Route"><svg><use href="#route"/></svg></button>
    <i class="sep wide"></i>
    <button class="off" aria-label="Tune"><svg><use href="#wave"/></svg></button><button class="off" aria-label="Gloss"><svg><use href="#star"/></svg></button><button class="off" aria-label="Smooth"><svg><use href="#waves"/></svg></button>
    <i class="sep wide"></i>
    <button class="off" aria-label="Net A"><svg><use href="#netx"/></svg></button><button class="off" aria-label="Net B"><svg><use href="#netx"/></svg></button><button class="off" aria-label="Net C"><svg><use href="#netx"/></svg></button><button class="off" aria-label="Lock"><svg><use href="#lock"/></svg></button><button class="off" aria-label="Unlock"><svg><use href="#unlock"/></svg></button>
    <i class="sep wide"></i>
    <button class="off" aria-label="Status"><svg><use href="#traffic"/></svg></button>
    <i class="sep wide"></i>
  </div>
  <div class="toolbar short">
    <i class="grip"></i>
    <button aria-label="Select vias"><svg><use href="#dotselg"/></svg></button>
    <i class="sep wide"></i>
    <button aria-label="Elbow"><svg><use href="#elbow"/></svg></button><button aria-label="Swap"><svg><use href="#swap"/></svg></button>
    <i class="sep wide"></i>
    <button aria-label="Bend"><svg><use href="#bend"/></svg></button><button class="off" aria-label="Spur"><svg><use href="#spur"/></svg></button><button class="off" aria-label="Meander"><svg><use href="#maze"/></svg></button>
    <i class="sep wide"></i>
    <button aria-label="Measure"><svg><use href="#measure"/></svg></button><button class="off" aria-label="Vector text"><svg><use href="#vect"/></svg></button><button class="off" aria-label="Copper"><svg><use href="#copper"/></svg></button>
    <i class="sep wide"></i>
    <button aria-label="Origin"><svg><use href="#origin"/></svg></button><button aria-label="Order"><svg><use href="#order"/></svg></button>
  </div>
  <svg class="layout">
    <defs>
      <g id="dotrow" stroke-dasharray="1 7 1 6 1 7 1 7 1 7 1 6 1 7 1 7 1 6 1 7"><path d="M0 .500h77M0 8.500h77M0 15.500h77M0 23.500h77M0 31.500h77M0 39.500h77M0 46.500h77M0 54.500h77M0 62.500h77M0 69.500h77"/></g>
      <pattern id="griddots" x="7" y="2" width="77" height="77" patternUnits="userSpaceOnUse"><use href="#dotrow" stroke="#e0e0e0"/></pattern>
      <pattern id="paddots" x="7" y="2" width="77" height="77" patternUnits="userSpaceOnUse"><use href="#dotrow" stroke="#50c850"/></pattern>
    </defs>
    <path class="black" d="M0 0h900v900H0z"/>
    <path fill="url(#griddots)" d="M0 0h900v900H0z"/>
    <path fill="none" stroke="#1818a0" stroke-dasharray="2 1" d="M115.500 87.500h463v186h-463z"/>
    <path fill="#33cc33" d="M298 96h97v31h-97zM298 234h97v31h-97z"/>
    <g fill="#008000"><rect x="116" y="87" width="185" height="187" rx="17"/><rect x="393" y="87" width="185" height="187" rx="17"/></g>
    <g fill="url(#paddots)"><rect x="116" y="87" width="185" height="187" rx="17"/><rect x="393" y="87" width="185" height="187" rx="17"/></g>
    <text class="pad-text" x="169" y="206">1:L</text>
    <text class="pad-text" x="440" y="206">2:L</text>
  </svg>
  <div class="action-keys"><button class="first" aria-label="F1"></button><button aria-label="F2"></button><button aria-label="F3"></button><button aria-label="F4"></button><button aria-label="F5"></button></div>
  <footer class="status"><span>Select</span><div class="status-pane"></div></footer>
</section>

<section class="window place-pins">
  <header class="titlebar inactive"><svg class="icon"><use href="#logo"/></svg><h1>Place Pins - 2 of 2 pins placed</h1></header>
  <div class="pp-body">
    <div class="pp-left">
      <div class="panel"><span>Pins:</span><button class="tool" aria-label="New pin"><svg><use href="#spark"/></svg></button><button class="tool" aria-label="Properties"><svg><use href="#props"/></svg></button><button class="tool" aria-label="Place"><svg><use href="#place"/></svg></button><i class="gap"></i><button class="tool faint" aria-label="Delete"><svg><use href="#cross"/></svg></button></div>
      <div class="well pp-well">
        <table class="grid-table">
          <colgroup><col class="w24"><col class="w58"><col class="w129"><col class="w50"><col class="w54"><col></colgroup>
          <thead><tr><th></th><th>Pin # <svg class="sort-up"><path d="M1 6h7L4 1z" fill="#eee" stroke="#aaa"/></svg></th><th>Padstack Name</th><th>Side</th><th>Rotation</th><th>NetClass</th></tr></thead>
          <tbody><tr><td class="fixed mark">P</td><td>1</td><td>RR_0.60_0.60</td><td>Mount</td><td>90</td><td>(Default)</td></tr><tr><td class="fixed mark">P</td><td>2</td><td>RR_0.60_0.60</td><td>Mount</td><td>90</td><td>(Default)</td></tr></tbody>
        </table>
      </div>
      <button class="push renumber">Renumber Pins...</button>
    </div>
    <div class="pp-right">
      <div class="tabs"><button class="tab on">Parameter Place</button><button class="tab">Pattern Place</button></div>
      <div class="tab-page">
        <fieldset class="qty"><legend>Pin quantity and spacing</legend>
          <div class="field"><label for="cols"># Columns:</label><input id="cols" type="text"></div>
          <hr>
          <div class="field"><label for="rows"># Rows:</label><input id="rows" type="text"></div>
        </fieldset>
        <fieldset class="seq"><legend>Pin sequence</legend>
          <div class="seq-grid"><button aria-label="Right, top first"><svg><use href="#seqr"/></svg></button><button aria-label="Left, top first"><svg><use href="#seql"/></svg></button><i></i><button aria-label="Down, left first"><svg><use href="#seqd"/></svg></button><button aria-label="Down, right first"><svg><use href="#seqd2"/></svg></button>
          <button aria-label="Right, bottom first"><svg><use href="#seqr2"/></svg></button><button aria-label="Left, bottom first"><svg><use href="#seql2"/></svg></button><i></i><button aria-label="Up, left first"><svg><use href="#sequ"/></svg></button><button aria-label="Up, right first"><svg><use href="#sequ2"/></svg></button></div>
        </fieldset>
      </div>
      <div class="pp-buttons"><button class="push" disabled>Place</button><button class="push" disabled>Unplace</button></div>
    </div>
  </div>
</section>

<section class="window pin-mapping">
  <header class="titlebar"><svg class="icon"><use href="#pm"/></svg><h1>Pin Mapping - GRM155R61C473KA01D : GRM155R61C473KA01D : C0402 16V 0,047uF 10%</h1>
    <span class="captions"><button aria-label="Minimize"><svg><use href="#min"/></svg></button><button class="dim" aria-label="Maximize"><svg><use href="#max"/></svg></button><button class="close" aria-label="Close"><svg><use href="#x"/></svg></button></span></header>
  <div class="pm-body">
    <div class="pm-groups">
      <fieldset class="assign-symbol"><legend>Assign symbol</legend>
        <div class="panel"><span>Symbol and symbol property list:</span><button class="tool" aria-label="New"><svg><use href="#spark"/></svg></button><button class="tool" aria-label="Import"><svg><use href="#import"/></svg></button><i class="gap"></i><button class="tool" aria-label="Undo"><svg><use href="#undo2"/></svg></button><button class="tool red" aria-label="Delete"><svg><use href="#cross"/></svg></button></div>
        <div class="well sym-well">
          <table class="grid-table"><colgroup><col class="w18"><col class="w130"><col></colgroup>
            <thead><tr><th></th><th>Symbol Name</th><th>Description</th></tr></thead>
            <tbody><tr class="picked"><td class="fixed"><input type="radio" checked aria-label="Default symbol"></td><td>Capacitors:cap</td><td></td></tr></tbody></table>
        </div>
        <p class="hint"><svg width="13" height="12"><path d="M5 2v9h8" fill="none" stroke="#000"/><path d="M1 5h8L5 0z"/></svg>Selection indicates default symbol.</p>
        <div class="well prop-well">
          <table class="grid-table"><colgroup><col class="w139"><col></colgroup>
            <thead><tr><th>Symbol Property Name</th><th>Value</th></tr></thead>
            <tbody><tr><td></td><td></td></tr></tbody></table>
        </div>
      </fieldset>
      <fieldset class="assign-cell"><legend>Assign package cell</legend>
        <div class="cell-cols">
          <div class="cell-labels"><span>Top:</span><span>Bottom:</span><span class="alt">Alternates:</span></div>
          <div class="cell-fields">
            <div class="panel"><span>Cell list:</span><button class="tool" aria-label="New"><svg><use href="#spark"/></svg></button><button class="tool" aria-label="Import"><svg><use href="#import"/></svg></button><i class="gap"></i><button class="tool off" aria-label="Undo"><svg><use href="#undo2"/></svg></button><button class="tool off" aria-label="Delete"><svg><use href="#cross"/></svg></button></div>
            <div class="well cell-well">
              <table class="grid-table"><colgroup><col class="w157"><col></colgroup>
                <thead><tr><th>Cell Name</th><th>Description</th></tr></thead>
                <tbody><tr><td>CAPC1005x55N</td><td class="fixed">Capacitor 0402</td></tr><tr><td></td><td class="fixed"></td></tr></tbody></table>
            </div>
            <div class="well alt-well">
              <table class="grid-table"><colgroup><col class="w157"><col></colgroup>
                <tbody><tr><td>CAPC1005x55L</td><td class="fixed">Capacitor 0402</td></tr><tr><td>CAPC1005x55M</td><td class="fixed">Capacitor 0402</td></tr></tbody></table>
            </div>
          </div>
        </div>
        <p class="note">A top or bottom package cell is required.&nbsp; Alternate package cells are optional.</p>
      </fieldset>
    </div>
    <div class="tabs"><button class="tab on">Logical</button><button class="tab">Physical</button><button class="tab">Supply and NC</button></div>
    <div class="tab-page pm-page">
      <div class="logical">
        <div class="panel sunken"><span>Logical pins:</span></div>
        <div class="well list-well">
          <table class="grid-table"><thead><tr><th>Pin Name</th></tr></thead></table>
          <div class="hscroll list-scroll"><span class="knob"><svg><use href="#larr"/></svg></span><span class="knob"></span><span class="knob end"><svg><use href="#rarr"/></svg></span></div>
        </div>
      </div>
      <div class="swaps">
        <div class="panel"><span>Define equivalent logical pins and swappability:</span><button class="tool" aria-label="New"><svg><use href="#spark"/></svg></button><i class="gap"></i><button class="tool off" aria-label="Renumber"><svg><use href="#renum"/></svg></button><button class="tool" aria-label="Paste right"><svg><use href="#clipr"/></svg></button><button class="tool" aria-label="Paste down"><svg><use href="#clipd"/></svg></button><i class="gap"></i><button class="tool off" aria-label="Make swappable"><svg><use href="#dots1"/></svg></button><button class="tool off" aria-label="Remove swappable"><svg><use href="#dots2"/></svg></button><i class="gap"></i><button class="tool off" aria-label="Undo"><svg><use href="#undo2"/></svg></button><button class="tool off" aria-label="Delete"><svg><use href="#cross"/></svg></button></div>
        <div class="well swap-well">
          <table class="grid-table swap-table"><colgroup><col class="w16"><col class="w60"><col class="w85"><col class="w60"><col class="w36"></colgroup>
            <thead><tr><th class="ic"><svg width="14" height="14"><use href="#swapdots"/></svg></th><th>Property</th><th>Value</th><th>Slot #1</th><th>Pin #</th></tr></thead>
            <tbody>
              <tr class="gate"><td></td><td colspan="4">Gate</td></tr>
              <tr><td class="swatch"></td><td class="pale">Pin Type</td><td class="pale">Bidir</td><td>N1</td><td class="fixed">1</td></tr>
              <tr><td class="swatch"></td><td class="pale">Pin Type</td><td class="pale">Bidir</td><td>N2</td><td class="fixed">2</td></tr>
            </tbody></table>
        </div>
      </div>
    </div>
    <div class="pm-footer"><button class="push preview">Symbol / Cell Preview...</button><button class="push default">OK</button><button class="push">Cancel</button><button class="push help" aria-label="Help"><svg><use href="#book"/></svg></button></div>
  </div>
</section>
</body>
</html>
```
FILE: styles.css
```css
:root {
  --face: #d4d0c8;
  --shadow: #808080;
  --dark: #404040;
  --navy: #0a246a;
  --ui: Roboto, "Noto Sans", sans-serif;
  --dither: repeating-conic-gradient(#fff 0 25%, #e0ddd6 0 50%) 0 0 / 2px 2px;
}
* { box-sizing: border-box; }
html, body { height: 100%; margin: 0; overflow: hidden; }
body { background: #fff; font: 11px/14px var(--ui); color: #000; position: relative; }
h1, h2, p, fieldset { margin: 0; padding: 0; font: inherit; }
button, input { font: inherit; color: inherit; margin: 0; padding: 0; }
button { background: none; border: 0; white-space: nowrap; }
a { color: inherit; text-decoration: none; }
svg text { font-family: "Liberation Sans", sans-serif; }
svg text.serif { font-family: "Liberation Serif", serif; }
.sprite { position: absolute; width: 0; height: 0; }
.black { fill: #000; }
.backdrop { height: 27px; background: #e6e4de; border-top: 18px solid #a6a6a6; }

/* windows */
.window { position: absolute; display: flex; flex-direction: column; background: var(--face); border: 1px solid; border-color: #ece9e2 var(--dark) var(--dark) #ece9e2; box-shadow: inset 1px 1px 0 #fff, inset -1px -1px 0 var(--shadow); }
.editor { left: 0; top: 0; right: 243px; bottom: -8px; padding: 2px; }
.cell-editor { left: 990px; top: 27px; right: -20px; bottom: 33px; padding: 1px 2px; }
.place-pins { left: 1018px; top: 600px; right: -160px; height: 378px; padding: 2px 3px; }
.pin-mapping { left: 12px; top: 215px; width: 744px; padding: 3px; }

.titlebar { flex: none; display: flex; align-items: center; height: 18px; padding: 0 2px; gap: 3px; background: linear-gradient(90deg, var(--navy), #a6caf0); color: #fff; }
.titlebar.inactive { background: linear-gradient(90deg, #808080, #b8b8b8); color: #d4d0c8; }
.titlebar h1 { flex: 1; font: bold 11px/18px "DejaVu Sans Condensed", "DejaVu Sans", sans-serif; white-space: nowrap; }
.icon { width: 16px; height: 16px; flex: none; }
.captions { display: flex; }
.captions button { width: 16px; height: 14px; display: flex; align-items: center; justify-content: center; background: var(--face); color: #000; border: 1px solid; border-color: #fff var(--dark) var(--dark) #fff; }
.captions svg { width: 9px; height: 9px; }
.captions .close { margin-left: 2px; }
.captions .dim { color: #808080; }

.menu { flex: none; display: flex; align-items: center; height: 23px; padding: 2px 0 0 6px; gap: 9px; }
.menu.muted { color: #87857f; }
.cell-menu { height: 26px; padding: 3px 0 0; border-bottom: 1px solid var(--shadow); }
.cell-menu .icon { margin: 0 -6px 0 -8px; }
u { text-underline-offset: 1px; }

.toolbar { flex: none; display: flex; align-items: center; height: 31px; padding-left: 1px; border-top: 1px solid #fff; border-bottom: 1px solid var(--shadow); overflow: hidden; }
.main-tools { height: 27px; margin-right: -2px; }
.toolbar.short { align-self: flex-start; padding-right: 8px; margin-bottom: 1px; border-right: 1px solid var(--shadow); }
.toolbar button { flex: none; width: 23px; height: 23px; display: flex; align-items: center; justify-content: center; }
.toolbar button.drop { width: 20px; }
.toolbar button svg { width: 16px; height: 16px; shape-rendering: crispEdges; }
.toolbar .pressed { background: var(--dither); border: 1px solid; border-color: var(--shadow) #fff #fff var(--shadow); }
.off { color: #808080; }
.off svg { filter: drop-shadow(1px 1px 0 #fff); }
.red { color: #a00010; }
.blue { color: #000080; }
.grip { flex: none; width: 8px; height: 23px; background: linear-gradient(90deg, transparent 1px, #fff 1px 2px, var(--face) 2px 3px, var(--shadow) 3px 4px, #fff 4px 5px, var(--face) 5px 6px, var(--shadow) 6px 7px, transparent 7px); }
.main-tools .grip ~ .grip { width: 11px; }
.sep { flex: none; width: 6px; height: 27px; background: linear-gradient(90deg, transparent 2px, var(--shadow) 2px 3px, #fff 3px 4px, transparent 4px); }
.sep.wide { width: 8px; }
.key-in { width: 80px; height: 20px; flex: none; border: 2px solid; border-color: var(--dark) #fff #fff var(--dark); padding-left: 2px; }

/* docks */
.workspace { flex: 1; min-height: 0; display: flex; gap: 5px; margin-top: 46px; }
.left-docks { width: 377px; flex: none; display: flex; flex-direction: column; gap: 4px; }
.right-docks { flex: 1; min-width: 0; display: flex; flex-direction: column; gap: 4px; }
.dock { display: flex; flex-direction: column; }
.dock h2 { flex: none; height: 16px; line-height: 16px; padding: 0 3px 0 1px; display: flex; align-items: center; justify-content: space-between; background: #808080; color: #d4d0c8; }
.dock h2.active { background: var(--navy); color: #fff; }
.dock-close { width: 12px; height: 12px; background: var(--face); color: #000; border: 1px solid; border-color: #fff var(--dark) var(--dark) #fff; display: flex; align-items: center; justify-content: center; }
.dock-close svg { width: 6px; height: 6px; }
.pins-dock { flex: 1; min-height: 0; }
.pins-body { flex: 1; position: relative; background: #fff; border-left: 2px solid var(--dark); border-right: 2px solid #eee; }
.vscroll { position: absolute; right: 0; top: 21px; bottom: 0; width: 16px; background: var(--dither); }
.knob { display: flex; align-items: center; justify-content: center; flex: none; width: 16px; height: 16px; background: var(--face); border: 1px solid; border-color: #fff var(--dark) var(--dark) #fff; }
.knob svg { width: 14px; height: 14px; }
.hscroll { flex: none; height: 16px; display: flex; background: var(--dither); }
table { border-collapse: separate; border-spacing: 0; table-layout: fixed; width: 100%; }
th, td { font-weight: normal; text-align: left; white-space: nowrap; padding: 0; overflow: hidden; }
.pins-table th { height: 21px; padding: 1px 3px 0; background: var(--face); border-right: 1px solid var(--dark); border-bottom: 2px solid var(--dark); border-top: 1px solid #fff; }
.pins-table td { height: 20px; padding: 0 3px; border-right: 1px dotted #aaa; border-bottom: 1px dotted #aaa; }
.sort { width: 12px; height: 11px; margin-left: 3px; vertical-align: -1px; }
.add-row { padding: 3px 2px; }
.w14 { width: 14px; } .w16 { width: 16px; } .w18 { width: 18px; } .w24 { width: 24px; } .w36 { width: 36px; }
.w50 { width: 50px; } .w54 { width: 54px; } .w58 { width: 58px; } .w60 { width: 60px; }
.w85 { width: 85px; } .w103 { width: 103px; } .w129 { width: 129px; } .w130 { width: 130px; } .w139 { width: 139px; }
.w157 { width: 157px; } .w175 { width: 175px; }

.prop-dock { flex: none; padding-bottom: 4px; }
.prop-head { height: 22px; background: var(--face); border: 2px solid; border-color: var(--dark) #fff #fff var(--dark); }
.prop-body { display: flex; background: #fff; border-left: 2px solid var(--shadow); }
.prop-table { flex: 1; }
.prop-table th, .prop-table td { height: 18px; line-height: 17px; border-bottom: 1px dotted #888; border-right: 1px dotted #888; padding-left: 2px; }
.prop-table th { padding-left: 22px; }
.prop-table .sel { background: #000080; color: #fff; }
.prop-table .sub { padding-left: 45px; }
.prop-table .newprop { padding-left: 44px; }
.prop-table .group::before { content: "−"; display: inline-block; width: 9px; height: 9px; margin: 0 7px 0 -17px; border: 1px solid #808080; font: 9px/7px var(--ui); text-align: center; vertical-align: 0; }
.prop-table input { appearance: none; width: 10px; height: 10px; margin: 0 6px 0 1px; border: 1px solid #000; background: #c0c0c0; vertical-align: -2px; position: relative; }
.prop-table td input { margin: 0 7px 0 4px; }
.prop-table input:checked::after { content: ""; position: absolute; left: 2px; top: 0; width: 4px; height: 6px; border: solid #000; border-width: 0 2px 2px 0; transform: rotate(40deg); }
.track { width: 19px; flex: none; background: var(--dither); }

.symbol-dock { flex: 1; min-height: 0; }
.doc-tabs { flex: none; height: 25px; padding: 2px 0 0 2px; border-bottom: 1px solid var(--dark); }
.doc-tab { display: block; height: 21px; width: 49px; padding-right: 4px; border: 1px solid; border-color: #fff var(--dark) transparent #fff; border-right-width: 2px; }
.view { flex: 1; min-height: 0; margin-left: 1px; border-left: 2px solid var(--shadow); display: grid; grid-template: 24px 1fr 16px / 23px 1fr; }
.ruler-h { grid-area: 1 / 2; margin: 5px 0 4px 11px; background: #fff; overflow: hidden; }
.ruler-v { grid-area: 2 / 1; margin: 10px 4px 5px 4px; background: #fff; overflow: hidden; }
.ruler-h svg, .ruler-v svg { display: block; }
.tick { stroke: #000; }
.num text { font-size: 11px; text-anchor: middle; }
.schematic { grid-area: 2 / 2; width: 100%; height: 100%; }
.view-scroll { grid-area: 3 / 2; }
.thumb { width: 9px; margin-left: 435px; background: var(--face); border: 1px solid; border-color: #fff var(--dark) var(--dark) #fff; }
svg .part-text { font-family: Roboto, "Liberation Sans", sans-serif; font-size: 50px; fill: #187a74; }
.sheet-tabs { flex: none; height: 27px; border-top: 1px solid #fff; border-bottom: 1px solid #fff; padding-left: 2px; }
.sheet-tabs svg { display: block; }
.sheet-tabs text { font: 11px var(--ui); }
.console-dock { flex: none; }

/* cell editor */
.layout { flex: 1; min-height: 0; width: 100%; border-top: 1px solid var(--dark); }
svg .pad-text { font-family: Lato, sans-serif; font-weight: 300; font-size: 69px; font-variant-numeric: proportional-nums; fill: #fff; stroke: #fff; stroke-width: 1; }
.action-keys { flex: none; display: flex; gap: 2px; padding: 3px 0 2px 1px; margin-top: 6px; border-top: 1px solid var(--dark); }
.action-keys button { width: 125px; height: 23px; flex: none; border: 1px solid; border-color: #fff var(--dark) var(--dark) #fff; border-bottom-width: 2px; }
.action-keys .first { border: 2px solid #000; border-top-width: 1px; border-left-width: 1px; }
.status { flex: none; height: 24px; display: flex; align-items: center; padding: 1px 0 0 1px; border-top: 1px solid #fff; }
.status span { width: 333px; }
.status-pane { flex: 1; height: 16px; border: 1px solid; border-color: var(--shadow) #fff #fff var(--shadow); }

/* dialog parts */
.panel { flex: none; display: flex; align-items: center; height: 23px; padding: 0 0 0 2px; border: 1px solid; border-color: var(--shadow) #fff #fff var(--shadow); box-shadow: inset 1px 1px 0 var(--dark), inset -1px -1px 0 var(--dark); white-space: nowrap; }
.panel span { flex: 1; }
.place-pins .panel { box-shadow: none; }
.panel.sunken { padding-left: 5px; box-shadow: inset 1px 1px 0 var(--dark); }
.gap { width: 6px; flex: none; }
.tool { width: 20px; height: 20px; flex: none; display: flex; align-items: center; justify-content: center; background: var(--face); border: 1px solid; border-color: #fff var(--dark) var(--dark) #fff; margin-right: 1px; }
.tool svg { width: 16px; height: 16px; flex: none; shape-rendering: crispEdges; }
.tool.red svg { width: 14px; height: 14px; }
.tool.faint { color: #a06058; }
.well { border: 1px solid; border-color: var(--shadow) #fff #fff var(--shadow); box-shadow: inset 1px 1px 0 var(--dark); padding: 1px 2px 0 1px; overflow: hidden; }
.grid-table th { height: 16px; line-height: 13px; padding: 0 0 0 6px; border: 1px solid; border-color: #fff var(--dark) var(--dark) #fff; background: var(--face); }
.grid-table td { height: 16px; line-height: 14px; padding: 0 2px; background: #fff; border-right: 1px solid #808080; border-bottom: 1px solid #808080; }
.grid-table .fixed { background: var(--face); }
.grid-table .mark { padding-left: 4px; }
fieldset { border: 1px solid var(--shadow); box-shadow: inset 1px 1px 0 #fff, 1px 1px 0 #fff; min-width: 0; }
legend { height: 14px; line-height: 14px; padding: 0 2px; margin-left: 6px; background: var(--face); }
.push { height: 23px; border: 1px solid; border-color: #fff var(--dark) var(--dark) #fff; box-shadow: inset -1px -1px 0 var(--shadow); }
.push:disabled { color: #808080; text-shadow: 1px 1px 0 #fff; }
.push.default { border: 1px solid #000; box-shadow: inset 1px 1px 0 #fff, inset -1px -1px 0 var(--dark); }
.tabs { display: flex; align-items: flex-end; height: 20px; }
.tab { height: 18px; padding: 0 5px; border: 1px solid; border-color: #fff var(--dark) transparent #fff; border-radius: 2px 2px 0 0; white-space: nowrap; }
.tab.on { height: 20px; padding: 0 7px; }
.tab-page { border: 1px solid; border-color: #fff var(--dark) var(--dark) #fff; box-shadow: inset -1px -1px 0 var(--shadow); }

/* pin mapping */
.pm-body { padding: 8px 9px 10px 11px; }
.pm-groups { display: flex; gap: 15px; }
.assign-symbol { width: 305px; height: 210px; padding: 10px 11px 0; flex: none; }
.assign-symbol legend { margin-left: -5px; }
.assign-cell { flex: 1; height: 210px; padding: 10px 13px 0 0; }
.sym-well { height: 64px; margin-top: 2px; }
.sym-well .grid-table, .prop-well .grid-table { width: 277px; }
.hint { display: flex; align-items: center; gap: 5px; height: 30px; padding: 0 0 2px 3px; }
.prop-well { height: 53px; }
.picked td { background: var(--navy); color: #fff; }
.picked .fixed { padding: 0 3px; }
.picked input { appearance: none; display: block; width: 11px; height: 11px; border-radius: 6px; border: 1px solid #505050; background: radial-gradient(circle, #000 2px, #fff 3px); }
.cell-cols { display: flex; }
.cell-labels { width: 63px; padding: 46px 5px 0 0; line-height: 16px; text-align: right; display: flex; flex-direction: column; }
.cell-labels .alt { margin-top: 7px; }
.cell-fields { flex: 1; min-width: 0; }
.cell-well { height: 62px; margin-top: 2px; }
.cell-well th { height: 17px; }
.alt-well { height: 64px; margin-top: 4px; }
.note { padding: 6px 0 0 8px; white-space: nowrap; }
.pm-body > .tabs { margin-top: 14px; padding-left: 2px; }
.pm-page { margin-left: 2px; display: flex; gap: 9px; padding: 20px 12px 14px 16px; }
.logical { width: 150px; flex: none; }
.swaps { flex: 1; min-width: 0; }
.list-well, .swap-well { height: 214px; margin-top: 2px; }
.list-well { display: flex; flex-direction: column; justify-content: space-between; }
.list-well .grid-table { width: 146px; }
.list-scroll { width: 146px; }
.list-scroll .end { margin-left: auto; }
.swap-table { width: 257px; }
.swap-table th.ic { padding: 0; }
.swap-table th svg { display: block; }
.swap-table td { height: 15px; line-height: 14px; }
.swap-table .gate td { background: #808080; color: #fff; border-color: #808080; }
.swap-table .gate td + td { padding-left: 6px; }
.swap-table .swatch { background: #00f; border: 1px solid #fff; }
.swap-table .pale { background: #ffffe1; }
.pm-footer { display: flex; margin-top: 15px; gap: 9px; }
.pm-footer .push { width: 75px; }
.pm-footer .preview { width: 131px; margin-right: auto; }
.pm-footer .help { width: 24px; display: flex; align-items: center; justify-content: center; }
.help svg { width: 16px; height: 16px; flex: none; }

/* place pins */
.pp-body { display: flex; gap: 13px; flex: 1; padding: 9px 0 0 10px; }
.pp-left { width: 393px; flex: none; }
.pp-well { height: 275px; margin-top: 4px; }
.pp-well th { height: 17px; }
.sort-up { width: 10px; height: 8px; margin-left: 4px; }
.renumber { width: 120px; margin-top: 10px; }
.pp-right { flex: 1; padding-top: 3px; }
.pp-right .tab { padding: 0 4px; }
.pp-right .tab-page { height: 276px; padding: 13px 12px; }
.qty { height: 113px; padding: 9px 10px 0; }
.qty legend { margin-left: -5px; }
.seq { height: 94px; margin-top: 17px; padding: 13px 0 0 26px; }
.seq legend { margin-left: -21px; }
.field { display: flex; align-items: center; }
.field label { width: 54px; text-align: right; margin-right: 5px; white-space: nowrap; }
.field input { width: 38px; height: 23px; background: #fff; border: 2px solid; border-color: var(--dark) #fff #fff var(--dark); }
hr { border: 0; height: 2px; margin: 12px 0 13px; background: linear-gradient(#808080 1px, #fff 1px); }
.seq-grid { display: grid; grid-template-columns: 24px 24px 6px 24px 24px; gap: 2px; }
.seq-grid button { height: 23px; border: 1px solid; border-color: #fff var(--dark) var(--dark) #fff; border-right-width: 2px; border-bottom-width: 2px; padding: 0; }
.seq-grid svg { width: 20px; height: 20px; display: block; }
.pp-buttons { display: flex; gap: 9px; padding: 15px 0 0 32px; }
.pp-buttons .push { width: 75px; }
```
